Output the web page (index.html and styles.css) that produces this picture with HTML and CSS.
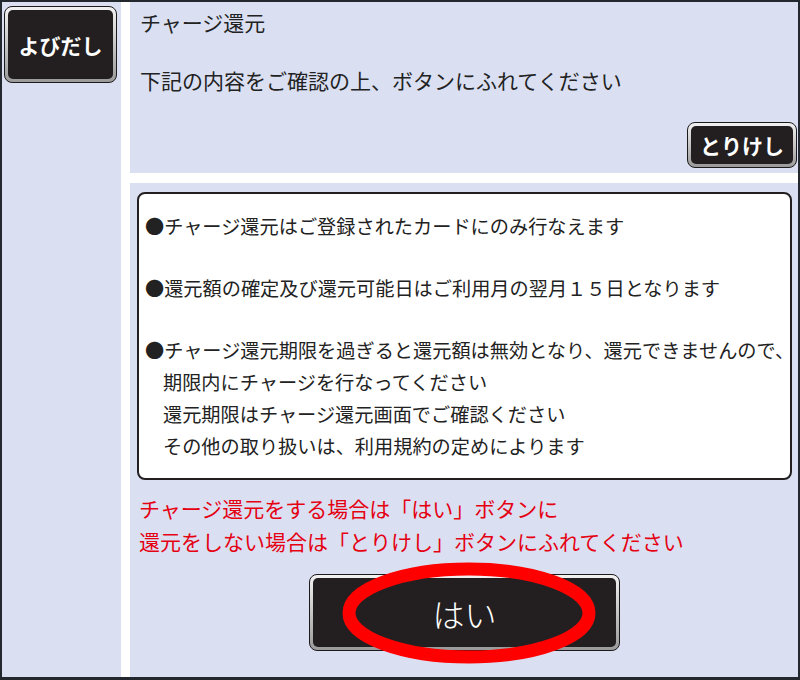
FILE: index.html
```html
<!DOCTYPE html>
<html lang="ja">
<head>
    <meta charset="UTF-8">
    <meta name="viewport" content="width=device-width, initial-scale=1.0">
    <title>チャージ還元</title>
    <link rel="stylesheet" href="styles.css">
</head>
<body>
    <div class="screen">
        <div class="side">
            <button class="btn btn-call"><span>よびだし</span></button>
        </div>
        <div class="main">
            <div class="header">
                <h1>チャージ還元</h1>
                <p class="message">下記の内容をご確認の上、ボタンにふれてください</p>
                <button class="btn btn-cancel"><span>とりけし</span></button>
            </div>
            <div class="content">
                <div class="notice">
                    <p>●チャージ還元はご登録されたカードにのみ行なえます</p>
                    <p>●還元額の確定及び還元可能日はご利用月の翌月１５日となります</p>
                    <p>●チャージ還元期限を過ぎると還元額は無効となり、還元できませんので、<br>
                        <span class="indent">期限内にチャージを行なってください</span><br>
                        <span class="indent">還元期限はチャージ還元画面でご確認ください</span><br>
                        <span class="indent">その他の取り扱いは、利用規約の定めによります</span></p>
                </div>
                <p class="warning">チャージ還元をする場合は「はい」ボタンに<br>還元をしない場合は「とりけし」ボタンにふれてください</p>
                <div class="confirm">
                    <button class="btn btn-yes"><span>はい</span></button>
                    <svg class="circle" width="270" height="116" viewBox="0 0 270 116">
                        <ellipse cx="135" cy="58" rx="120" ry="44" fill="none" stroke="#ff0000" stroke-width="13"/>
                    </svg>
                </div>
            </div>
        </div>
    </div>
</body>
</html>
```

FILE: styles.css
```css
* {
    box-sizing: border-box;
}

body {
    margin: 0;
    background-color: #23272e;
    font-family: "Noto Sans CJK JP", "Noto Sans", sans-serif;
    color: #222;
}

.screen {
    width: 800px;
    height: 680px;
    border-style: solid;
    border-color: #23272e;
    border-width: 2px 2px 3px 2px;
    background-color: #fff;
    display: grid;
    grid-template-columns: 119px minmax(0, 1fr);
    column-gap: 9px;
}

.side {
    background-color: #dae0f2;
    padding: 4px 0 0 2px;
}

.main {
    display: grid;
    grid-template-rows: 171px minmax(0, 1fr);
    grid-template-columns: minmax(0, 1fr);
    row-gap: 10px;
}

.header {
    background-color: #dae0f2;
    padding: 5px 1px 5px 10px;
    display: flex;
    flex-direction: column;
}

h1 {
    margin: 0;
    font-size: 21px;
    font-weight: normal;
    line-height: 30px;
}

.message {
    margin: 28px 0 0;
    font-size: 21px;
    line-height: 30px;
}

.btn {
    padding: 3px;
    border: 1px solid #1c1a1a;
    border-radius: 8px;
    background: linear-gradient(#f2f2f2, #9a9a9a);
    font-family: inherit;
    cursor: pointer;
}

.btn span {
    display: flex;
    align-items: center;
    justify-content: center;
    height: 100%;
    border-radius: 5px;
    background-color: #231f20;
    color: #fff;
}

.btn-call {
    width: 113px;
    height: 77px;
}

.btn-call span,
.btn-cancel span {
    font-size: 21px;
    font-weight: bold;
}

.btn-cancel {
    align-self: flex-end;
    margin-top: auto;
    width: 110px;
    height: 46px;
}

.content {
    background-color: #dae0f2;
    padding: 9px 6px 0 7px;
}

.notice {
    background-color: #fff;
    border: 2px solid #231f20;
    border-radius: 8px;
    padding: 16px 0 16px 6px;
    font-size: 19.2px;
    line-height: 32px;
    white-space: nowrap;
}

.notice p {
    margin: 0 0 30px;
}

.notice p:last-child {
    margin-bottom: 0;
}

.indent {
    padding-left: 18px;
}

.warning {
    margin: 12px 0 0 2px;
    font-size: 21px;
    line-height: 33px;
    color: #e50012;
}

.confirm {
    position: relative;
    display: flex;
    justify-content: center;
    margin-top: 16px;
}

.btn-yes {
    width: 311px;
    height: 77px;
}

.btn-yes span {
    font-size: 32px;
    font-weight: 300;
}

.circle {
    position: absolute;
    left: 197px;
    top: -19px;
}
```
